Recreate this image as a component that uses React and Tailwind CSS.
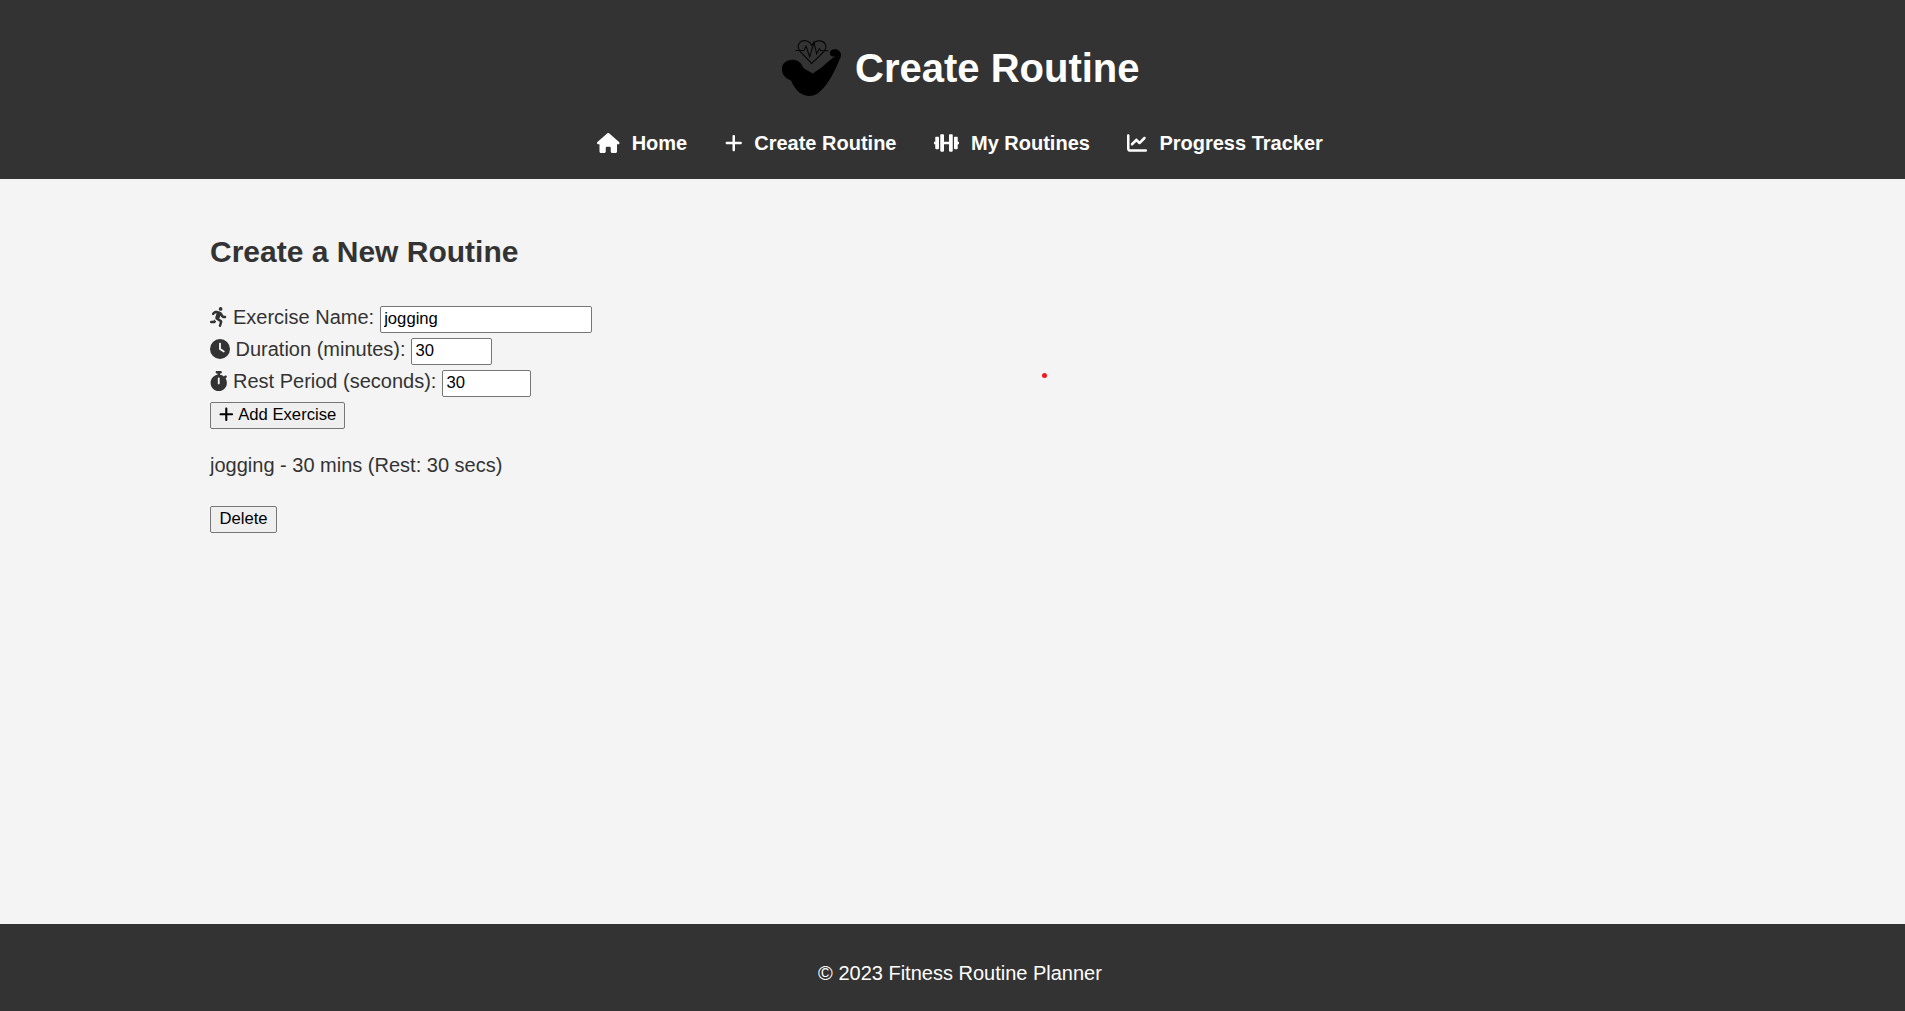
import React from "react";
import { FaDumbbell } from "react-icons/fa";
import {
  FaHouse,
  FaPlus,
  FaChartLine,
  FaPersonRunning,
  FaClock,
  FaStopwatch,
} from "react-icons/fa6";

const links = [
  { label: "Home", Icon: FaHouse, size: "w-[22.5px]" },
  { label: "Create Routine", Icon: FaPlus, size: "w-[17.5px]" },
  { label: "My Routines", Icon: FaDumbbell, size: "w-[25px]" },
  { label: "Progress Tracker", Icon: FaChartLine, size: "w-[20px]" },
];

const fields = [
  { label: "Exercise Name:", value: "jogging", Icon: FaPersonRunning, size: "w-[17.5px]", input: "w-[212px]" },
  { label: "Duration (minutes):", value: "30", Icon: FaClock, size: "w-[20px]", input: "w-[81px]" },
  { label: "Rest Period (seconds):", value: "30", Icon: FaStopwatch, size: "w-[17.5px]", input: "w-[89px]" },
];

function Logo() {
  return (
    <svg viewBox="0 0 75 68" className="h-[68px] w-[75px] shrink-0" aria-hidden="true">
      <path
        d="M7 36C6.5 29.500 11.500 25.800 17.500 25.800C22 25.800 25.500 28 27.300 32C28.300 35 32 36 37.800 39.600C43 36 47 33.500 51 29.500L57.800 23.800C59 23.200 60.300 22.800 59.800 22.200C57 23 54.800 21.500 54.800 19.200C54.800 16.800 57 15.300 60 15.300C63.500 15.300 66 17.800 66 20.800C66 23 65 25 63.500 28C59.500 37.500 54.500 47.500 48 54.500C44 59 40 62 34.500 62C26.500 62 20.500 56.500 16.500 47.500C15.700 45.800 14.800 46 12.500 44.800C9.300 43 7.300 40.200 7 36Z"
        fill="#000"
      />
      <path
        d="M36.700 29.500L25.500 18C20.500 11.500 25 6.500 29.500 6.600C33 6.700 35.500 8.500 36.700 11.500C38.200 8.500 41 6.700 44.500 6.900C50 7.200 53.500 12.500 48.500 18Z"
        fill="none"
        stroke="#000"
        strokeOpacity="0.85"
        strokeWidth="1.100"
      />
      <path
        d="M20.300 16.500H29L31 12.200L34.700 22.800L39 8.500L41.700 20L44.300 14.800L46 16.700H53.500"
        fill="none"
        stroke="#000"
        strokeOpacity="0.85"
        strokeWidth="1.100"
      />
    </svg>
  );
}

export default function App() {
  return (
    <div className="relative flex h-[1011px] w-full flex-col bg-[#f4f4f4] font-['Liberation_Sans',Arial,sans-serif] text-[20px] leading-[32px] text-[#333]">
      <header className="flex h-[179px] flex-col items-center bg-[#333] pl-[15px] text-white">
        <div className="mt-[34px] flex h-[68px] items-center gap-[5px] pr-[5.500px]">
          <Logo />
          <h1 className="text-[40px] leading-[64px] font-bold">Create Routine</h1>
        </div>
        <nav className="mt-[25px] flex items-center gap-[37.500px] font-bold">
          {links.map(({ label, Icon, size }) => (
            <a key={label} href="#" className="flex h-[32px] items-center gap-[12px] whitespace-nowrap">
              <Icon className={`${size} h-[20px] shrink-0`} />
              {label}
            </a>
          ))}
        </nav>
      </header>

      <main className="flex-1 pl-[210px]">
        <h2 className="pt-[49px] text-[30px] leading-[48px] font-bold">Create a New Routine</h2>
        <form className="mt-[25px]">
          {fields.map(({ label, value, Icon, size, input }) => (
            <div key={label} className="flex h-[32px] items-start">
              <Icon className={`${size} mt-[6px] h-[20px] shrink-0`} />
              <label className="ml-[5.500px] whitespace-nowrap">{label}</label>
              <input
                type="text"
                defaultValue={value}
                className={`${input} mt-[5px] ml-[5.500px] h-[27px] rounded-[2px] border border-[#767676] bg-white px-[3.500px] pb-[1px] text-[16.667px] leading-[19px] text-black outline-none`}
              />
            </div>
          ))}
          <button
            type="button"
            className="mt-[5px] flex h-[27px] w-[135px] items-center rounded-[2px] border border-[#767676] bg-[#efefef] pb-[2px] pl-[8px] text-[16.667px] leading-[19px] whitespace-nowrap text-black"
          >
            <FaPlus className="mr-[4.600px] h-[16.667px] w-[14.583px] shrink-0" />
            Add Exercise
          </button>
        </form>
        <p className="mt-[20px] h-[32px]">jogging - 30 mins (Rest: 30 secs)</p>
        <button
          type="button"
          className="mt-[25px] flex h-[27px] w-[67px] items-center justify-center rounded-[2px] border border-[#767676] bg-[#efefef] pb-[2px] text-[16.667px] leading-[19px] text-black"
        >
          Delete
        </button>
      </main>

      <footer className="flex h-[87px] items-center justify-center bg-[#333] pt-[10px] pl-[15px] text-white">
        <p>© 2023 Fitness Routine Planner</p>
      </footer>

      <span className="absolute top-[373px] left-[1042px] size-[5px] rounded-full bg-[#f01818]" />
    </div>
  );
}
